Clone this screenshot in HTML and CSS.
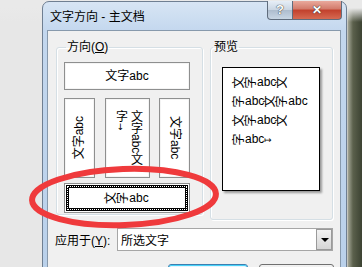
FILE: index.html
```html
<!DOCTYPE html>
<html>
<head>
    <meta charset="utf-8">
    <title>文字方向 - 主文档</title>
    <link rel="stylesheet" href="styles.css">
</head>
<body>
<div class="desk">
    <div class="win">
        <div class="titlebar">
            <span class="title">文字方向 - 主文档</span>
            <div class="caps">
                <span class="cap help">?</span>
                <span class="cap close">✕</span>
            </div>
        </div>
        <div class="client">
            <div class="groups">
                <fieldset class="grp dir">
                    <legend>方向(<u>O</u>)</legend>
                    <div class="opt horiz">文字abc</div>
                    <div class="vrow">
                        <div class="opt narrow"><span class="vt up">文字abc</span></div>
                        <div class="opt wide"><span class="vt stack">文字abc文<br>字<span class="mark">↓</span></span></div>
                        <div class="opt narrow"><span class="vt down">文字abc</span></div>
                    </div>
                    <div class="opt horiz sel"><span class="inner"><span class="r">文</span><span class="r">字</span>abc</span></div>
                </fieldset>
                <fieldset class="grp prev">
                    <legend>预览</legend>
                    <div class="page">
                        <div class="line"><span class="r">文</span><span class="r">字</span>abc<span class="r">文</span></div>
                        <div class="line"><span class="r">字</span>abc<span class="r">文</span><span class="r">字</span>abc</div>
                        <div class="line"><span class="r">文</span><span class="r">字</span>abc<span class="r">文</span></div>
                        <div class="line"><span class="r">字</span>abc<span class="end">↦</span></div>
                    </div>
                </fieldset>
            </div>
            <div class="apply">
                <span class="lbl">应用于(<u>Y</u>):</span>
                <div class="combo">
                    <span class="val">所选文字</span>
                    <span class="drop"></span>
                </div>
            </div>
            <div class="btns">
                <span class="btn ok"></span>
                <span class="btn"></span>
            </div>
        </div>
    </div>
    <!-- 빨간 동그라미 표시 -->
    <svg class="mark-ring" width="362" height="267" viewBox="0 0 362 267">
        <ellipse cx="124" cy="197" rx="92" ry="28" fill="none" stroke="#ef3a3c" stroke-width="6" transform="rotate(-2 124 197)"/>
    </svg>
</div>
</body>
</html>
```

FILE: styles.css
```css
body
{
    margin:0;
    font-family:"Liberation Sans","Noto Sans CJK SC",sans-serif;
    font-size:12px;
    color:#000;
}
.desk
{
    position:relative;
    width:362px;
    height:267px;
    overflow:hidden;
    background:linear-gradient(to bottom, #e9e9e9 0, #e9e9e9 8px, transparent 22px),
               linear-gradient(to right, #e7e7e7 0, #e7e7e7 347px, #a3a595 348px, #5b604c 353px, #3c4232 362px);
}
.win
{
    position:absolute;
    left:42px;
    top:1px;
    width:305px;
    height:290px;
    box-sizing:border-box;
    border:1px solid #6f7f92;
    border-radius:7px 7px 0 0;
    background:linear-gradient(to bottom, #d7e5f4 0, #c3d7ee 30px, #b9d0ea 100%);
}
.titlebar
{
    height:28px;
    display:flex;
    justify-content:space-between;
    align-items:flex-start;
}
.title
{
    margin-left:7px;
    margin-top:8px;
    line-height:14px;
    font-size:12px;
}
.caps
{
    display:flex;
    margin-right:4px;
    margin-top:-1px;
}
.cap
{
    height:19px;
    box-sizing:border-box;
    border:1px solid #5f6c7c;
    border-top:none;
    color:#fff;
    font-weight:bold;
    text-align:center;
    line-height:18px;
    text-shadow:0 0 1px #333, 0 0 1px #333;
}
.help
{
    width:26px;
    border-radius:0 0 0 4px;
    background:linear-gradient(to bottom, #e6eef7 0, #c9d5e2 50%, #adbccd 51%, #c8d6e4 100%);
    font-size:13px;
}
.close
{
    width:49px;
    border-left:none;
    border-radius:0 0 4px 0;
    background:linear-gradient(to bottom, #e9a99c 0, #d27a6a 45%, #c2402c 50%, #d66a52 100%);
    font-size:12px;
}
.client
{
    margin:0 5px 0 4px;
    height:260px;
    box-sizing:border-box;
    border:1px solid #8799ac;
    background:#f0f0f0;
    padding:9px 7px 0 8px;
}
.groups
{
    display:flex;
    gap:7px;
    align-items:flex-start;
}
.grp
{
    margin:0;
    padding:0;
    box-sizing:border-box;
    border:1px solid #d5dfe5;
    border-radius:3px;
    box-shadow:inset 1px 1px 0 #fff, 1px 1px 0 #fff;
}
.grp legend
{
    padding:0 1px;
    margin-left:2px;
    line-height:14px;
    height:14px;
}
.dir
{
    width:147px;
    height:175px;
    padding:8px 0 0 7px;
}
.prev
{
    width:123px;
    height:180px;
}
.opt
{
    box-sizing:border-box;
    border:1px solid #8e8f8f;
    background:#fff;
    box-shadow:inset 0 0 0 1px #f4f4f4;
    display:flex;
    align-items:center;
    justify-content:center;
}
.horiz
{
    width:126px;
    height:28px;
    line-height:14px;
}
.vrow
{
    display:flex;
    margin:8px 0 5px 0;
    height:80px;
}
.narrow
{
    width:31px;
    height:80px;
}
.wide
{
    width:45px;
    height:80px;
    margin:0 9px 0 10px;
    align-items:flex-start;
    padding-top:11px;
}
.vt
{
    writing-mode:vertical-rl;
    line-height:15px;
}
.up
{
    text-orientation:sideways;
    transform:rotate(180deg);
}
.down
{
    text-orientation:sideways;
}
.stack
{
    text-orientation:mixed;
}
.mark
{
    text-orientation:upright;
    font-family:"DejaVu Sans",sans-serif;
    font-size:9px;
}
.sel
{
    height:30px;
    padding:1px;
    box-shadow:none;
}
.sel .inner
{
    width:100%;
    height:100%;
    box-sizing:border-box;
    border:3px solid #000;
    outline:1px dotted #fff;
    outline-offset:-2px;
    display:flex;
    align-items:center;
    justify-content:center;
}
.r
{
    display:inline-block;
    transform:rotate(-90deg);
    width:12px;
    text-align:center;
}
.page
{
    width:98px;
    height:124px;
    margin:13px 0 0 11px;
    box-sizing:border-box;
    border:1px solid #000;
    background:#fff;
    box-shadow:2px 2px 2px #9a9a9a;
    padding:5px 0 0 10px;
}
.line
{
    height:19px;
    line-height:19px;
    white-space:nowrap;
}
.end
{
    font-family:"DejaVu Sans",sans-serif;
    font-size:9px;
}
.apply
{
    display:flex;
    align-items:center;
    margin-top:8px;
    height:23px;
}
.lbl
{
    width:62px;
    margin-left:-1px;
}
.combo
{
    width:216px;
    height:23px;
    box-sizing:border-box;
    border:1px solid #a6a6a6;
    background:#fff;
    display:flex;
    align-items:center;
    justify-content:space-between;
}
.val
{
    margin-left:3px;
}
.drop
{
    width:16px;
    height:21px;
    box-sizing:border-box;
    border:1px solid #9a9a9a;
    background:linear-gradient(to bottom, #f2f2f2, #d6d6d6);
    position:relative;
}
.drop:after
{
    content:"";
    position:absolute;
    left:4px;
    top:8px;
    border-left:4px solid transparent;
    border-right:4px solid transparent;
    border-top:4px solid #000;
}
.btns
{
    display:flex;
    justify-content:flex-end;
    gap:11px;
    margin-top:13px;
    margin-right:-1px;
}
.btn
{
    width:75px;
    height:22px;
    box-sizing:border-box;
    border:1px solid #707070;
    border-radius:3px;
    background:linear-gradient(to bottom, #f2f2f2, #dcdcdc);
}
.btn.ok
{
    width:80px;
    border-color:#3c7fb1;
    box-shadow:inset 0 0 0 1px #48d2f8;
    background:linear-gradient(to bottom, #eaf6fd, #bee6fd);
}
.mark-ring
{
    position:absolute;
    left:0;
    top:0;
}
```
